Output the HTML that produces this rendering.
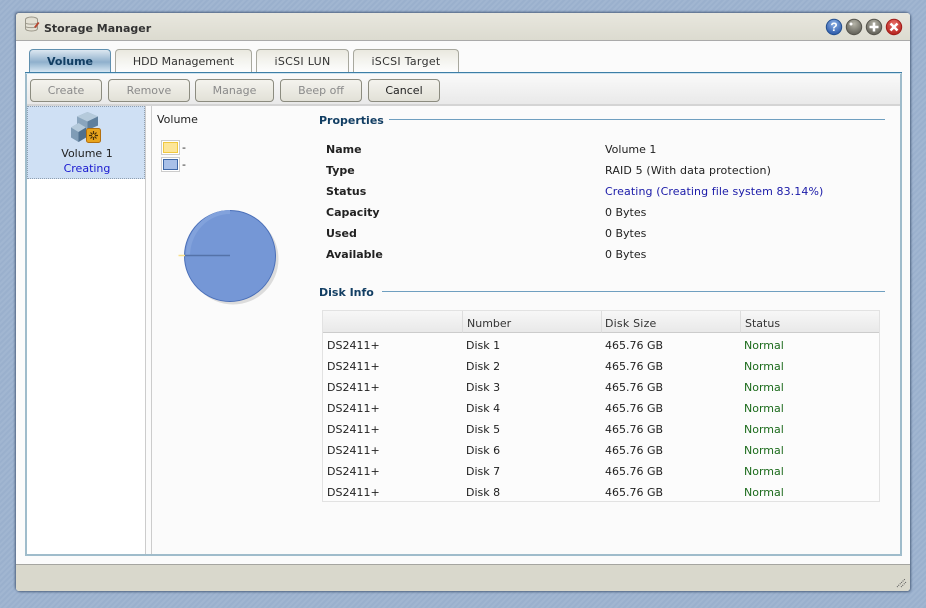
<!DOCTYPE html>
<html><head><meta charset="utf-8">
<style>
html,body{margin:0;padding:0}
body{width:926px;height:608px;overflow:hidden;position:relative;font:11px/14px "DejaVu Sans",sans-serif;color:#222;
background:#9db3cf repeating-linear-gradient(135deg,#a1b6d1 0 2px,#9ab0cd 2px 4px)}
.a{position:absolute;white-space:nowrap}
.win{position:absolute;left:16px;top:13px;width:894px;height:578px;background:#fbfbfb;border-radius:3px;box-shadow:-1px -1px 2px #4f6380,1px 1px 2px #4f6380}
.title{position:absolute;left:16px;top:13px;width:894px;height:27px;background:linear-gradient(#e8e7de,#dcdbd0);border-bottom:1px solid #aaa;border-radius:3px 3px 0 0}
.foot{position:absolute;left:16px;top:564px;width:894px;height:27px;background:#d9d8cc;border-top:1px solid #a5a5a0;box-sizing:border-box;border-radius:0 0 3px 3px}
.tab{position:absolute;top:49px;height:23px;box-sizing:border-box;border:1px solid #a8a89e;border-bottom:0;border-radius:4px 4px 0 0;background:linear-gradient(#e9e8df,#f4f4ef 50%,#fdfdfd);text-align:center;line-height:23px;color:#333}
.btn{position:absolute;top:79px;height:23px;box-sizing:border-box;border:1px solid #8c8c80;border-radius:4px;background:linear-gradient(#f4f3ee,#e2e1d7);text-align:center;line-height:21px;color:#8a8a8a}
.b{font-weight:bold;color:#222}
.h{font-weight:bold;color:#123e63}
.ln{position:absolute;height:1px;background:#6f9fc0}
.cell{position:absolute;height:21px;line-height:21px;white-space:nowrap}
.g{color:#1c6b1c}
.th{position:absolute;top:311px;height:22px;box-sizing:border-box;background:linear-gradient(#f7f7f7,#e9e9e9);border-bottom:1px solid #ccc;border-right:1px solid #ddd;line-height:25px;padding-left:4px;color:#333}
.leg{position:absolute;left:161px;width:19px;height:15px;box-sizing:border-box;border:1px solid #ccc;padding:1px;background:#fff}
.leg i{display:block;width:15px;height:11px;box-sizing:border-box}
</style></head><body>
<div class="win"></div>
<div class="title"></div>
<svg class="a" style="left:24px;top:16px" width="18" height="18" viewBox="0 0 18 18"><ellipse cx="7.500" cy="3.500" rx="6" ry="2.500" fill="#e0ddd0" stroke="#9a978a"/><path d="M1.500 3.500v9c0 1.500 2.500 2.500 6 2.500s6-1 6-2.500v-9" fill="#e4e1d5" stroke="#9a978a"/><path d="M1.500 7c1 1.500 11 1.500 12 0M1.500 10.500c1 1.500 11 1.500 12 0" fill="none" stroke="#9a978a"/><path d="M10 11l4-5 1.500 1-4 5z" fill="#b8452f"/></svg>
<div class="a" style="left:44px;top:22px;font-weight:bold;color:#333">Storage Manager</div>
<svg class="a" style="left:825px;top:18px" width="80" height="18" viewBox="0 0 80 18">
<defs>
<radialGradient id="bl" cx=".5" cy=".3" r=".7"><stop offset="0" stop-color="#8fb2e6"/><stop offset="1" stop-color="#2a58a8"/></radialGradient>
<radialGradient id="gr" cx=".5" cy=".3" r=".7"><stop offset="0" stop-color="#b5b4a8"/><stop offset="1" stop-color="#5e5d55"/></radialGradient>
<radialGradient id="rd" cx=".5" cy=".3" r=".7"><stop offset="0" stop-color="#ea7068"/><stop offset="1" stop-color="#b3201c"/></radialGradient>
</defs>
<circle cx="9" cy="9" r="7.700" fill="url(#bl)" stroke="#24508f"/>
<text x="9" y="13" font-family="Liberation Sans" font-size="12" font-weight="bold" fill="#fff" text-anchor="middle">?</text>
<circle cx="29" cy="9" r="7.700" fill="url(#gr)" stroke="#55544c"/>
<circle cx="26" cy="6" r="1.500" fill="#fff"/>
<circle cx="49" cy="9" r="7.700" fill="url(#gr)" stroke="#55544c"/>
<path d="M49 4.500v9M44.500 9h9" stroke="#fff" stroke-width="2.500"/>
<circle cx="69" cy="9" r="7.700" fill="url(#rd)" stroke="#a01c18"/>
<path d="M65.500 5.500l7 7M72.500 5.500l-7 7" stroke="#fff" stroke-width="2.500"/>
</svg>

<div class="tab" style="left:29px;width:82px;background:linear-gradient(#dce7f0,#8fb0cc 55%,#d6e6f3);border-color:#5f8fae;font-weight:bold;color:#123e63">Volume</div>
<div class="tab" style="left:115px;width:137px">HDD Management</div>
<div class="tab" style="left:256px;width:93px;letter-spacing:.3px">iSCSI LUN</div>
<div class="tab" style="left:353px;width:106px;letter-spacing:.3px">iSCSI Target</div>

<div class="a" style="left:25px;top:72px;width:877px;height:484px;box-sizing:border-box;border:2px solid #9fbccb;border-top:0;background:#fbfbfb"></div>
<div class="a" style="left:25px;top:72px;width:877px;height:1px;background:#3d7ea6"></div>
<div class="a" style="left:26px;top:73px;width:875px;height:1px;background:#cfe3ef"></div>
<div class="a" style="left:27px;top:74px;width:873px;height:30px;background:linear-gradient(#fafafa,#e9e9e9);border-bottom:2px solid #d4d4d4"></div>

<div class="btn" style="left:30px;width:72px">Create</div>
<div class="btn" style="left:108px;width:82px">Remove</div>
<div class="btn" style="left:195px;width:79px">Manage</div>
<div class="btn" style="left:280px;width:82px">Beep off</div>
<div class="btn" style="left:368px;width:72px;color:#222">Cancel</div>

<div class="a" style="left:27px;top:106px;width:118px;height:448px;background:#fff;border-right:1px solid #ccc"></div>
<div class="a" style="left:146px;top:106px;width:5px;height:448px;background:#fbfbfb;border-right:1px solid #ccc"></div>
<div class="a" style="left:27px;top:106px;width:118px;height:73px;box-sizing:border-box;border:1px dotted #8f9fb0;background:#cfe0f4"></div>
<svg class="a" style="left:69px;top:111px" width="36" height="34" viewBox="0 0 36 34">
<path d="M8 5.500L18.500 1 29 5.500v9L18.500 19 8 14.500z" fill="#8aa5bd"/><path d="M8 5.500l10.500 5 10.500-5L18.500 1z" fill="#b5cadb"/><path d="M18.500 10.500V19L29 14.500v-9z" fill="#5f7f9d"/>
<path d="M2 16.500L9.500 12l7.500 4.500v10L9.500 31 2 26.500z" fill="#7f9cb6"/><path d="M2 16.500l7.500 4.500 7.500-4.500L9.500 12z" fill="#b5cadb"/><path d="M9.500 21v10l7.500-4.500v-10z" fill="#4f708f"/>
<rect x="17.500" y="17.500" width="14" height="14" rx="2" fill="#e8a41c" stroke="#b4700f"/>
<g stroke="#4a3208" stroke-width="1.200"><path d="M24.500 20v3M24.500 26v3M20 24.500h3M26 24.500h3M21.500 21.500l2 2M25.500 25.500l2 2M27.500 21.500l-2 2M23.500 25.500l-2 2"/></g>
</svg>
<div class="a" style="left:27px;top:147px;width:120px;text-align:center">Volume 1</div>
<div class="a" style="left:27px;top:162px;width:120px;text-align:center;color:#1a1ad0">Creating</div>

<div class="a" style="left:157px;top:113px">Volume</div>
<div class="leg" style="top:140px"><i style="background:#fde699;border:1px solid #f0c840"></i></div>
<div class="a" style="left:182px;top:141px">-</div>
<div class="leg" style="top:157px"><i style="background:#a8c0e8;border:1px solid #3e68a8"></i></div>
<div class="a" style="left:182px;top:158px">-</div>

<svg class="a" style="left:175px;top:205px" width="110" height="105" viewBox="0 0 110 105">
<circle cx="58" cy="54" r="45.500" fill="#dcdcdc"/>
<circle cx="55" cy="51" r="45.500" fill="#7597d6" stroke="#4a6fb8"/>
<path d="M13 51a42 44 0 0 1 42-44" fill="none" stroke="#82a2dc" stroke-width="4"/>
<path d="M3.500 50.500h6.500" stroke="#f8e08a" stroke-width="1.500"/>
<path d="M10 50.500h45" stroke="#5572a8" stroke-width="1.500"/>
</svg>

<div class="a h" style="left:319px;top:114px">Properties</div>
<div class="ln" style="left:389px;top:119px;width:496px"></div>
<div class="a b" style="left:326px;top:143px">Name</div><div class="a" style="left:605px;top:143px">Volume 1</div>
<div class="a b" style="left:326px;top:164px">Type</div><div class="a" style="left:605px;top:164px;letter-spacing:.14px">RAID 5 (With data protection)</div>
<div class="a b" style="left:326px;top:185px">Status</div><div class="a" style="left:605px;top:185px;color:#1a1aa8;letter-spacing:.1px">Creating (Creating file system 83.14%)</div>
<div class="a b" style="left:326px;top:206px">Capacity</div><div class="a" style="left:605px;top:206px">0 Bytes</div>
<div class="a b" style="left:326px;top:227px">Used</div><div class="a" style="left:605px;top:227px">0 Bytes</div>
<div class="a b" style="left:326px;top:248px">Available</div><div class="a" style="left:605px;top:248px">0 Bytes</div>

<div class="a h" style="left:319px;top:286px">Disk Info</div>
<div class="ln" style="left:382px;top:291px;width:503px"></div>

<div class="a" style="left:322px;top:310px;width:558px;height:192px;box-sizing:border-box;border:1px solid #e2e2e2;background:#fcfcfc"></div>
<div class="th" style="left:323px;width:140px"></div>
<div class="th" style="left:463px;width:139px">Number</div>
<div class="th" style="left:602px;width:139px;padding-left:3px;letter-spacing:.2px">Disk Size</div>
<div class="th" style="left:741px;width:138px;border-right:0">Status</div>

<div class="cell" style="left:327px;top:335px">DS2411+</div><div class="cell" style="left:466px;top:335px">Disk 1</div><div class="cell" style="left:605px;top:335px">465.76 GB</div><div class="cell g" style="left:744px;top:335px">Normal</div>
<div class="cell" style="left:327px;top:356px">DS2411+</div><div class="cell" style="left:466px;top:356px">Disk 2</div><div class="cell" style="left:605px;top:356px">465.76 GB</div><div class="cell g" style="left:744px;top:356px">Normal</div>
<div class="cell" style="left:327px;top:377px">DS2411+</div><div class="cell" style="left:466px;top:377px">Disk 3</div><div class="cell" style="left:605px;top:377px">465.76 GB</div><div class="cell g" style="left:744px;top:377px">Normal</div>
<div class="cell" style="left:327px;top:398px">DS2411+</div><div class="cell" style="left:466px;top:398px">Disk 4</div><div class="cell" style="left:605px;top:398px">465.76 GB</div><div class="cell g" style="left:744px;top:398px">Normal</div>
<div class="cell" style="left:327px;top:419px">DS2411+</div><div class="cell" style="left:466px;top:419px">Disk 5</div><div class="cell" style="left:605px;top:419px">465.76 GB</div><div class="cell g" style="left:744px;top:419px">Normal</div>
<div class="cell" style="left:327px;top:440px">DS2411+</div><div class="cell" style="left:466px;top:440px">Disk 6</div><div class="cell" style="left:605px;top:440px">465.76 GB</div><div class="cell g" style="left:744px;top:440px">Normal</div>
<div class="cell" style="left:327px;top:461px">DS2411+</div><div class="cell" style="left:466px;top:461px">Disk 7</div><div class="cell" style="left:605px;top:461px">465.76 GB</div><div class="cell g" style="left:744px;top:461px">Normal</div>
<div class="cell" style="left:327px;top:482px">DS2411+</div><div class="cell" style="left:466px;top:482px">Disk 8</div><div class="cell" style="left:605px;top:482px">465.76 GB</div><div class="cell g" style="left:744px;top:482px">Normal</div>

<div class="foot"></div>
<svg class="a" style="left:896px;top:577px" width="12" height="12" viewBox="0 0 12 12"><path d="M1 10l8-8M5 10l5-5" stroke="#555" stroke-dasharray="1 1" fill="none"/></svg>
</body></html>
